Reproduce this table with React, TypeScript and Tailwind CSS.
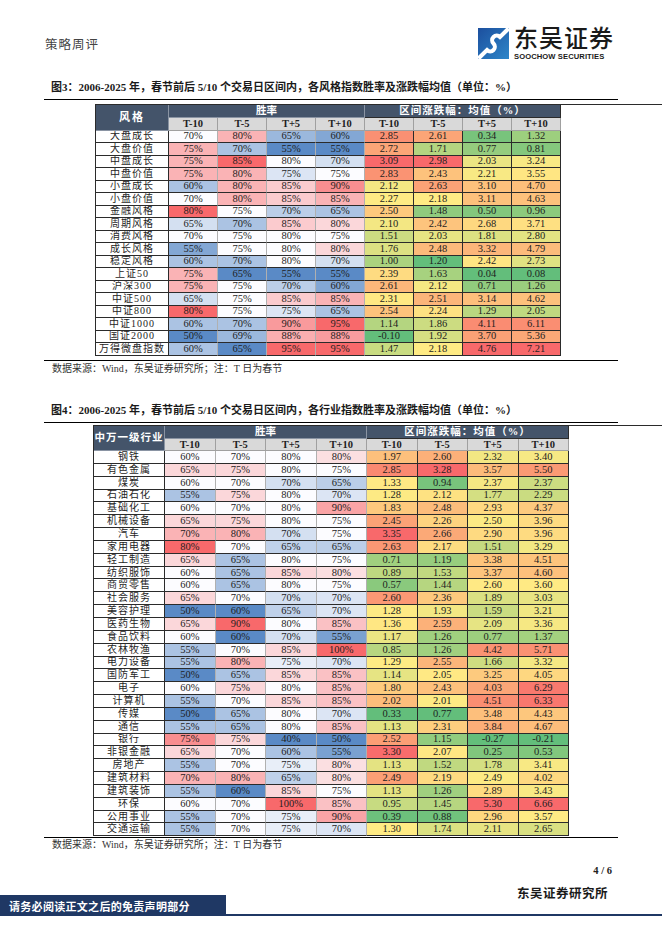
import React from "react";

type Row = [string, number[], number[]];

const styleRows: Row[] = [
  ["大盘成长", [70, 80, 65, 60], [2.85, 2.61, 0.34, 1.32]],
  ["大盘价值", [75, 70, 55, 55], [2.72, 1.71, 0.77, 0.81]],
  ["中盘成长", [75, 85, 80, 70], [3.09, 2.98, 2.03, 3.24]],
  ["中盘价值", [75, 80, 75, 75], [2.83, 2.43, 2.21, 3.55]],
  ["小盘成长", [60, 80, 85, 90], [2.12, 2.63, 3.1, 4.7]],
  ["小盘价值", [70, 80, 85, 85], [2.27, 2.18, 3.11, 4.63]],
  ["金融风格", [80, 75, 70, 65], [2.5, 1.48, 0.5, 0.96]],
  ["周期风格", [65, 70, 85, 80], [2.1, 2.42, 2.68, 3.71]],
  ["消费风格", [70, 75, 80, 75], [1.51, 2.03, 1.81, 2.8]],
  ["成长风格", [55, 75, 80, 80], [1.76, 2.48, 3.32, 4.79]],
  ["稳定风格", [60, 70, 80, 70], [1.0, 1.2, 2.42, 2.73]],
  ["上证50", [75, 65, 55, 55], [2.39, 1.63, 0.04, 0.08]],
  ["沪深300", [75, 75, 70, 60], [2.61, 2.12, 0.71, 1.26]],
  ["中证500", [65, 75, 85, 85], [2.31, 2.51, 3.14, 4.62]],
  ["中证800", [80, 75, 75, 65], [2.54, 2.24, 1.29, 2.05]],
  ["中证1000", [60, 70, 90, 95], [1.14, 1.86, 4.11, 6.11]],
  ["国证2000", [50, 69, 88, 88], [-0.1, 1.92, 3.7, 5.36]],
  ["万得微盘指数", [60, 65, 95, 95], [1.47, 2.18, 4.76, 7.21]],
];

const indRows: Row[] = [
  ["钢铁", [60, 70, 80, 80], [1.97, 2.6, 2.32, 3.4]],
  ["有色金属", [65, 75, 80, 75], [2.85, 3.28, 3.57, 5.5]],
  ["煤炭", [60, 70, 70, 65], [1.33, 0.94, 2.37, 2.37]],
  ["石油石化", [55, 75, 80, 70], [1.28, 2.12, 1.77, 2.29]],
  ["基础化工", [60, 70, 80, 90], [1.83, 2.48, 2.93, 4.37]],
  ["机械设备", [65, 75, 80, 75], [2.45, 2.26, 2.5, 3.96]],
  ["汽车", [70, 80, 70, 75], [3.35, 2.66, 2.9, 3.96]],
  ["家用电器", [80, 70, 65, 65], [2.63, 2.17, 1.51, 3.29]],
  ["轻工制造", [65, 65, 80, 75], [0.71, 1.19, 3.38, 4.51]],
  ["纺织服饰", [60, 65, 85, 80], [0.89, 1.53, 3.37, 4.6]],
  ["商贸零售", [60, 65, 80, 75], [0.57, 1.44, 2.6, 3.6]],
  ["社会服务", [65, 70, 70, 70], [2.6, 2.36, 1.89, 3.03]],
  ["美容护理", [50, 60, 65, 70], [1.28, 1.93, 1.59, 3.21]],
  ["医药生物", [65, 90, 80, 85], [1.36, 2.59, 2.09, 3.36]],
  ["食品饮料", [60, 60, 70, 55], [1.17, 1.26, 0.77, 1.37]],
  ["农林牧渔", [55, 70, 85, 100], [0.85, 1.26, 4.42, 5.71]],
  ["电力设备", [55, 80, 75, 70], [1.29, 2.55, 1.66, 3.32]],
  ["国防军工", [50, 65, 85, 85], [1.14, 2.05, 3.25, 4.05]],
  ["电子", [60, 75, 80, 85], [1.8, 2.43, 4.03, 6.29]],
  ["计算机", [55, 70, 85, 85], [2.02, 2.01, 4.51, 6.33]],
  ["传媒", [50, 65, 80, 70], [0.33, 0.77, 3.48, 4.43]],
  ["通信", [55, 65, 80, 85], [1.13, 2.31, 3.84, 4.67]],
  ["银行", [75, 75, 40, 50], [2.52, 1.15, -0.27, -0.21]],
  ["非银金融", [65, 70, 60, 55], [3.3, 2.07, 0.25, 0.53]],
  ["房地产", [55, 70, 75, 80], [1.13, 1.52, 1.78, 3.41]],
  ["建筑材料", [70, 80, 65, 80], [2.49, 2.19, 2.49, 4.02]],
  ["建筑装饰", [55, 60, 85, 75], [1.13, 1.26, 2.89, 3.43]],
  ["环保", [60, 70, 100, 85], [0.95, 1.45, 5.3, 6.66]],
  ["公用事业", [55, 70, 75, 90], [0.39, 0.88, 2.96, 3.57]],
  ["交通运输", [55, 70, 75, 70], [1.3, 1.74, 2.11, 2.65]],
];

type RGB = [number, number, number];
const WIN: RGB[] = [
  [0x5a, 0x8a, 0xc6],
  [0xfc, 0xfc, 0xff],
  [0xf8, 0x69, 0x6b],
];
const RET: RGB[] = [
  [0x63, 0xbe, 0x7b],
  [0xff, 0xeb, 0x84],
  [0xf8, 0x69, 0x6b],
];

function median(arr: number[]) {
  const s = [...arr].sort((a, b) => a - b);
  const pos = (s.length - 1) * 0.5;
  const lo = Math.floor(pos);
  const hi = Math.ceil(pos);
  return s[lo] + (s[hi] - s[lo]) * (pos - lo);
}

function mix(a: RGB, b: RGB, t: number) {
  const c = a.map((x, i) => Math.round(x + (b[i] - x) * t));
  return `rgb(${c[0]},${c[1]},${c[2]})`;
}

function colorFor(v: number, col: number[], sc: RGB[]) {
  const mn = Math.min(...col);
  const mx = Math.max(...col);
  const md = median(col);
  if (v <= md) {
    const t = md === mn ? 1 : (v - mn) / (md - mn);
    return mix(sc[0], sc[1], t);
  }
  const t = mx === md ? 0 : (v - md) / (mx - md);
  return mix(sc[1], sc[2], t);
}

const LABELS = ["T-10", "T-5", "T+5", "T+10"];
const SERIF = "font-['Liberation_Serif','Noto_Sans_CJK_SC',serif]";

function HeatTable({
  rows,
  nameHeader,
  gridCols,
  rowH,
  wide,
}: {
  rows: Row[];
  nameHeader: string;
  gridCols: string;
  rowH: string;
  wide: boolean;
}) {
  const winCols = [0, 1, 2, 3].map((i) => rows.map((r) => r[1][i]));
  const retCols = [0, 1, 2, 3].map((i) => rows.map((r) => r[2][i]));
  return (
    <div className={`grid ${gridCols} border-l border-t border-[#2b2b2b] ${SERIF} text-[#1e1e1e]`}>
      <div
        className={`row-span-2 bg-[#44546a] text-white font-bold flex items-center justify-center border-r border-b border-[#8a94a3] ${
          wide ? "text-[10.5px] tracking-[1px]" : "text-[11px] tracking-[2px]"
        }`}
      >
        {nameHeader}
      </div>
      <div className="col-span-4 h-[13px] bg-[#44546a] text-white font-bold text-[10.5px] leading-[12px] text-center border-r border-b border-[#8a94a3]">
        胜率
      </div>
      <div className="col-span-4 h-[13px] bg-[#44546a] text-white font-bold text-[10.5px] leading-[12px] text-center border-r border-b border-[#2b2b2b] tracking-[1px]">
        区间涨跌幅：均值（%）
      </div>
      {[0, 1].map((g) =>
        LABELS.map((l) => (
          <div
            key={g + l}
            className="h-[12.5px] bg-[#d9d9d9] font-bold text-[10.5px] leading-[11px] text-center border-r border-b border-[#a0a0a0]"
          >
            {l}
          </div>
        ))
      )}
      {rows.map((r) => (
        <React.Fragment key={r[0]}>
          <div
            className={`${rowH} text-[10px] leading-[10px] text-center border-r border-b border-[#2b2b2b] tracking-[1px] flex items-center justify-center overflow-hidden`}
          >
            {r[0]}
          </div>
          {r[1].map((v, i) => (
            <div
              key={"w" + i}
              className={`${rowH} text-[10.5px] leading-[10px] text-center border-r border-b border-[#2b2b2b] border-r-[#b0b0b0] flex items-center justify-center`}
              style={{ backgroundColor: colorFor(v, winCols[i], WIN) }}
            >
              {v}%
            </div>
          ))}
          {r[2].map((v, i) => (
            <div
              key={"r" + i}
              className={`${rowH} text-[10.5px] leading-[10px] text-center border-r border-b border-[#2b2b2b] flex items-center justify-center`}
              style={{ backgroundColor: colorFor(v, retCols[i], RET) }}
            >
              {v.toFixed(2)}
            </div>
          ))}
        </React.Fragment>
      ))}
    </div>
  );
}

function Logo() {
  return (
    <div className="flex items-center gap-[5px]">
      <svg width="31" height="31" viewBox="0 0 32 32">
        <defs>
          <linearGradient id="lg" x1="0" y1="0" x2="1" y2="1">
            <stop offset="0" stopColor="#1c4f9e" />
            <stop offset="1" stopColor="#2d86c9" />
          </linearGradient>
          <clipPath id="cp">
            <rect x="0" y="0" width="32" height="32" />
          </clipPath>
        </defs>
        <rect x="0" y="0" width="32" height="32" fill="url(#lg)" />
        <g clipPath="url(#cp)">
          <g transform="rotate(-45 16 16)">
            <path
              d="M-6 16 L6.5 16 A4.75 4.75 0 0 0 16 16 A4.75 4.75 0 0 1 25.5 16 L38 16"
              fill="none"
              stroke="#ffffff"
              strokeWidth="4.2"
            />
          </g>
        </g>
      </svg>
      <div className="flex flex-col">
        <div className="font-['Noto_Sans_CJK_SC',sans-serif] text-[24px] leading-[24px] font-medium text-[#1a1a1a] tracking-[1px]">
          东吴证券
        </div>
        <div className="font-['Liberation_Sans',sans-serif] font-bold text-[7.6px] leading-[9px] mt-[3px] text-[#1a1a1a] tracking-[0.1px]">
          SOOCHOW SECURITIES
        </div>
      </div>
    </div>
  );
}

export default function App() {
  return (
    <div className="w-[662px] h-[936px] bg-white overflow-hidden flex flex-col">
      {/* header */}
      <div className="h-[80px] flex justify-between pl-[45px] pr-[48px]">
        <div className="mt-[36px] font-['Noto_Sans_CJK_SC',sans-serif] text-[12.5px] leading-[16px] text-[#444] tracking-[1px]">
          策略周评
        </div>
        <div className="mt-[25px]">
          <Logo />
        </div>
      </div>

      {/* caption 3 */}
      <div className={`mx-[44px] h-[20px] border-b border-black ${SERIF}`}>
        <div className="pl-[7px] text-[11px] leading-[14px] font-bold text-[#1a1a1a]">
          图3：2006-2025 年，春节前后 5/10 个交易日区间内，各风格指数胜率及涨跌幅均值（单位：%）
        </div>
      </div>

      <div className="pt-[4px] pl-[95px]">
        <HeatTable
          rows={styleRows}
          nameHeader="风格"
          gridCols="grid-cols-[73px_49px_49px_49px_49px_49px_49px_49px_49px]"
          rowH="h-[12.5px]"
          wide={false}
        />
      </div>

      <div className={`mt-[4px] mx-[44px] border-t border-black ${SERIF}`}>
        <div className="pl-[8px] pt-[1px] text-[10px] leading-[14px] text-[#333]">
          数据来源：Wind，东吴证券研究所；注：T 日为春节
        </div>
      </div>

      {/* caption 4 */}
      <div className={`mt-[27px] mx-[44px] h-[20px] border-b border-black ${SERIF}`}>
        <div className="pl-[7px] text-[11px] leading-[14px] font-bold text-[#1a1a1a]">
          图4：2006-2025 年，春节前后 5/10 个交易日区间内，各行业指数胜率及涨跌幅均值（单位：%）
        </div>
      </div>

      <div className="pt-[2px] pl-[93px]">
        <HeatTable
          rows={indRows}
          nameHeader="中万一级行业"
          gridCols="grid-cols-[71px_50.5px_50.5px_50.5px_50.5px_50.5px_50.5px_50.5px_50.5px]"
          rowH="h-[12.85px]"
          wide={true}
        />
      </div>

      <div className={`mt-[1px] mx-[44px] border-t border-black ${SERIF}`}>
        <div className="pl-[8px] pt-[0px] text-[10px] leading-[14px] text-[#333]">
          数据来源：Wind，东吴证券研究所；注：T 日为春节
        </div>
      </div>

      {/* page number */}
      <div className={`mt-[12px] pr-[50px] flex justify-end ${SERIF}`}>
        <div className="text-[10.5px] leading-[14px] font-bold text-[#222]">4 / 6</div>
      </div>

      <div className="h-[38px] flex justify-between">
        <div className="self-end flex items-end flex-1">
          <div className="w-[226px] h-[21px] bg-[#1f3864] flex items-center pl-[9px]">
            <span className="font-['Noto_Sans_CJK_SC',sans-serif] font-bold text-[11px] leading-[14px] text-white tracking-[0.3px]">
              请务必阅读正文之后的免责声明部分
            </span>
          </div>
          <div className="flex-1 h-[2px] bg-[#1f3864]" />
        </div>
        <div className="absolute right-[54px] top-[885px] font-['Noto_Sans_CJK_SC',sans-serif] font-bold text-[12.5px] leading-[16px] text-[#1a1a1a] tracking-[0.5px] bg-white">
          东吴证券研究所
        </div>
      </div>
    </div>
  );
}
